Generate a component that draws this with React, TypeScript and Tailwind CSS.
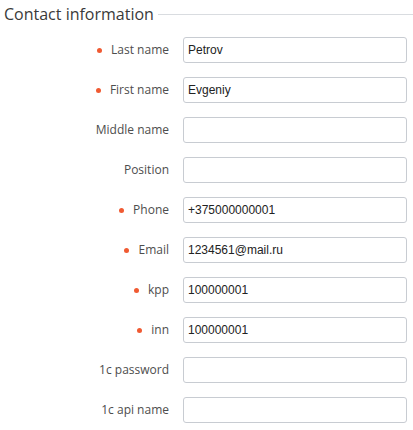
const fields = [
  { label: "Last name", value: "Petrov", required: true },
  { label: "First name", value: "Evgeniy", required: true },
  { label: "Middle name", value: "", required: false },
  { label: "Position", value: "", required: false },
  { label: "Phone", value: "+375000000001", required: true },
  { label: "Email", value: "1234561@mail.ru", required: true },
  { label: "kpp", value: "100000001", required: true },
  { label: "inn", value: "100000001", required: true },
  { label: "1c password", value: "", required: false },
  { label: "1c api name", value: "", required: false },
];

const App = () => {
  return (
    <div className="w-[413px] h-[430px] bg-white overflow-hidden" style={{ fontFamily: '"Open Sans", sans-serif' }}>
      <div className="flex items-center pl-[4px] h-[28px]">
        <h2 className="text-[16px] leading-[28px] text-[#3a3a3a] whitespace-nowrap">Contact information</h2>
        <div className="flex-1 ml-[4px] h-px bg-[#d9dce0] mt-[1px]"></div>
      </div>
      <div className="flex flex-col gap-[14px] mt-[9px]">
        {fields.map((f) => (
          <div key={f.label} className="flex items-center h-[26px]">
            <div className="w-[169px] flex items-center justify-end text-[12px] text-[#4d4d4d] whitespace-nowrap">
              {f.required && <span className="w-[5px] h-[5px] rounded-full bg-[#f05a32] mr-[9px]"></span>}
              <span>{f.label}</span>
            </div>
            <input
              readOnly
              value={f.value}
              className="ml-[14px] w-[224px] h-[26px] border border-[#c8ccd2] rounded-[3px] px-[4px] text-[12px] text-[#222] outline-none"
              style={{ fontFamily: '"Liberation Sans", Arial, sans-serif' }}
            />
          </div>
        ))}
      </div>
    </div>
  );
};

export default App;
